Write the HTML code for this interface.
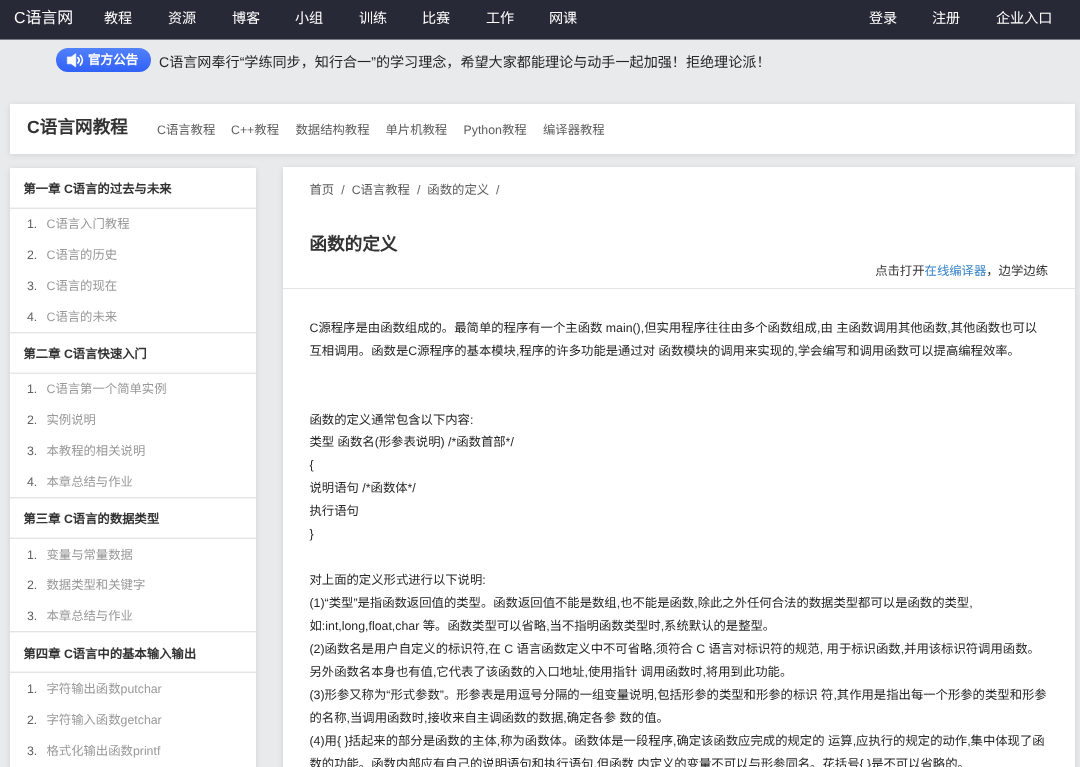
<!DOCTYPE html>
<html lang="zh-CN"><head><meta charset="utf-8">
<style>
*{margin:0;padding:0;box-sizing:border-box}
html,body{width:1080px;height:767px;overflow:hidden}
body{will-change:transform;background:#e9eaec;font-family:"Liberation Sans",sans-serif;color:#333;position:relative;text-rendering:geometricPrecision}
.a{position:absolute;white-space:nowrap}
#nav{position:absolute;left:0;top:0;width:1080px;height:39px;background:#272a36;box-shadow:0 1px 0 #787a82}
#nav .a{color:#fff;font-size:14.1px;line-height:40px;top:-2.5px}
#nav .a.logo{font-size:15.9px;top:-1.5px}
.pill{position:absolute;left:56.4px;top:47.8px;width:94.6px;height:24.3px;border-radius:12.2px;background:linear-gradient(180deg,#5281fc,#3061f7)}
.pill span{position:absolute;left:31.6px;top:0;line-height:24.3px;font-size:12.6px;font-weight:bold;color:#fff}
.notice{left:159px;top:50.8px;line-height:22px;font-size:14.1px;color:#262626}
.box{position:absolute;background:#fff;box-shadow:0 1px 6px rgba(0,0,0,.1)}
#hdr{left:10px;top:104px;width:1065px;height:50px}
#hdr .t{left:17px;top:-2px;line-height:50px;font-size:17.65px;font-weight:bold;color:#333}
#hdr .l{top:.6px;line-height:50px;font-size:12.35px;color:#5e5e5e}
#side{left:10px;top:167.5px;width:246px;height:620px}
.ch{position:absolute;left:0;width:246px;height:41px;border-bottom:1px solid #e6e6e6;box-shadow:inset 0 -1px 0 #f4f4f4;font-size:12.35px;font-weight:bold;color:#333;line-height:40px;padding-left:13.5px;padding-top:1.6px;white-space:nowrap}
.ch.bt{height:42px;border-top:1px solid #e3e3e3;box-shadow:inset 0 1px 0 #f5f5f5,inset 0 -1px 0 #f4f4f4}
.it{position:absolute;left:0;width:246px;height:30.8px;line-height:30.8px;font-size:12.35px;color:#999;white-space:nowrap}
.it b{font-weight:normal;color:#606060;position:absolute;left:17px;top:.7px}
.it i{font-style:normal;position:absolute;left:36.5px;top:.7px}
#main{left:282.5px;top:167px;width:792.5px;height:620px}
.bc{left:27px;top:14.5px;line-height:16px;font-size:12.35px;color:#5c5c5c}
.bc s{text-decoration:none;color:#666;padding:0 7px}
.ttl{left:27px;top:65px;line-height:24px;font-size:17.65px;font-weight:bold;color:#333}
.open{right:27px;top:95px;line-height:18px;font-size:12.35px;color:#333}
.open a{color:#3884c8;text-decoration:none}
.hr{position:absolute;left:0;top:120.5px;width:100%;height:1px;background:#e5e5e5}
.txt{position:absolute;left:27px;top:149.8px;font-size:12.35px;line-height:22.94px;color:#262626;white-space:nowrap}
</style></head><body>
<div id="nav">
<div class="a logo" style="left:14px">C语言网</div>
<div class="a" style="left:104px">教程</div>
<div class="a" style="left:168px">资源</div>
<div class="a" style="left:232px">博客</div>
<div class="a" style="left:295px">小组</div>
<div class="a" style="left:359px">训练</div>
<div class="a" style="left:422px">比赛</div>
<div class="a" style="left:486px">工作</div>
<div class="a" style="left:549px">网课</div>
<div class="a" style="left:869px">登录</div>
<div class="a" style="left:932px">注册</div>
<div class="a" style="left:996px">企业入口</div>
</div>
<div class="pill"><svg style="position:absolute;left:-56.4px;top:-47.8px" width="100" height="80" viewBox="0 0 100 80"><path d="M67.3 56.9h3.9l4.6-3.3v13.4l-4.6-3.2h-3.9z" fill="#fff" stroke="#fff" stroke-width=".6" stroke-linejoin="round"/><path d="M77.9 57.6q2.6 2.6 0 5.2" stroke="#fff" stroke-width="1.8" fill="none" stroke-linecap="round"/><path d="M80.3 55.3q4.3 4.9 0 9.8" stroke="#fff" stroke-width="1.6" fill="none" stroke-linecap="round"/></svg><span>官方公告</span></div>
<div class="a notice">C语言网奉行“学练同步，知行合一”的学习理念，希望大家都能理论与动手一起加强！拒绝理论派！</div>

<div class="box" id="hdr">
<div class="a t">C语言网教程</div>
<div class="a l" style="left:147px">C语言教程</div>
<div class="a l" style="left:221px">C++教程</div>
<div class="a l" style="left:285.5px">数据结构教程</div>
<div class="a l" style="left:375.5px">单片机教程</div>
<div class="a l" style="left:453.5px">Python教程</div>
<div class="a l" style="left:533px">编译器教程</div>
</div>

<div class="box" id="side">
<div class="ch" style="top:0">第一章 C语言的过去与未来</div>
<div class="it" style="top:41.0px"><b>1.</b><i>C语言入门教程</i></div>
<div class="it" style="top:71.8px"><b>2.</b><i>C语言的历史</i></div>
<div class="it" style="top:102.6px"><b>3.</b><i>C语言的现在</i></div>
<div class="it" style="top:133.4px"><b>4.</b><i>C语言的未来</i></div>
<div class="ch bt" style="top:164.2px">第二章 C语言快速入门</div>
<div class="it" style="top:206.2px"><b>1.</b><i>C语言第一个简单实例</i></div>
<div class="it" style="top:237.0px"><b>2.</b><i>实例说明</i></div>
<div class="it" style="top:267.8px"><b>3.</b><i>本教程的相关说明</i></div>
<div class="it" style="top:298.6px"><b>4.</b><i>本章总结与作业</i></div>
<div class="ch bt" style="top:329.4px">第三章 C语言的数据类型</div>
<div class="it" style="top:371.4px"><b>1.</b><i>变量与常量数据</i></div>
<div class="it" style="top:402.2px"><b>2.</b><i>数据类型和关键字</i></div>
<div class="it" style="top:433.0px"><b>3.</b><i>本章总结与作业</i></div>
<div class="ch bt" style="top:463.8px">第四章 C语言中的基本输入输出</div>
<div class="it" style="top:505.8px"><b>1.</b><i>字符输出函数putchar</i></div>
<div class="it" style="top:536.6px"><b>2.</b><i>字符输入函数getchar</i></div>
<div class="it" style="top:567.4px"><b>3.</b><i>格式化输出函数printf</i></div>
</div>

<div class="box" id="main">
<div class="a bc">首页<s>/</s>C语言教程<s>/</s>函数的定义<s>/</s></div>
<div class="a ttl">函数的定义</div>
<div class="a open">点击打开<a>在线编译器</a>，边学边练</div>
<div class="hr"></div>
<div class="txt">C源程序是由函数组成的。最简单的程序有一个主函数 main(),但实用程序往往由多个函数组成,由 主函数调用其他函数,其他函数也可以<br>互相调用。函数是C源程序的基本模块,程序的许多功能是通过对 函数模块的调用来实现的,学会编写和调用函数可以提高编程效率。<br><br><br>函数的定义通常包含以下内容:<br>类型 函数名(形参表说明) /*函数首部*/<br>{<br>说明语句 /*函数体*/<br>执行语句<br>}<br><br>对上面的定义形式进行以下说明:<br>(1)“类型”是指函数返回值的类型。函数返回值不能是数组,也不能是函数,除此之外任何合法的数据类型都可以是函数的类型,<br>如:int,long,float,char 等。函数类型可以省略,当不指明函数类型时,系统默认的是整型。<br>(2)函数名是用户自定义的标识符,在 C 语言函数定义中不可省略,须符合 C 语言对标识符的规范, 用于标识函数,并用该标识符调用函数。<br>另外函数名本身也有值,它代表了该函数的入口地址,使用指针 调用函数时,将用到此功能。<br>(3)形参又称为“形式参数”。形参表是用逗号分隔的一组变量说明,包括形参的类型和形参的标识 符,其作用是指出每一个形参的类型和形参<br>的名称,当调用函数时,接收来自主调函数的数据,确定各参 数的值。<br>(4)用{ }括起来的部分是函数的主体,称为函数体。函数体是一段程序,确定该函数应完成的规定的 运算,应执行的规定的动作,集中体现了函<br>数的功能。函数内部应有自己的说明语句和执行语句,但函数 内定义的变量不可以与形参同名。花括号{ }是不可以省略的。</div>
</div>
</body></html>
